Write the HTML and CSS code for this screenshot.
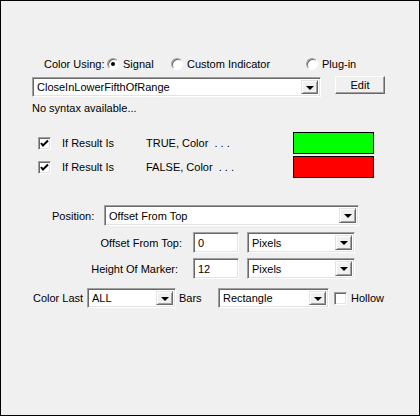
FILE: index.html
```html
<!DOCTYPE html>
<html lang="en">
<head>
    <meta charset="UTF-8">
    <title>Color Marker Settings</title>
    <link rel="stylesheet" href="styles.css">
</head>
<body>

<div class="dialog">

    <!-- Source of the color -->
    <div class="row row-using">
        <span class="using-lbl">Color Using:</span>
        <label class="opt opt-signal"><span class="radio checked"></span>Signal</label>
        <label class="opt opt-custom"><span class="radio"></span>Custom Indicator</label>
        <label class="opt"><span class="radio"></span>Plug-in</label>
    </div>

    <div class="row row-formula">
        <div class="field select formula">
            <span class="value">CloseInLowerFifthOfRange</span>
            <span class="drop"><span class="arrow"></span></span>
        </div>
        <button class="btn">Edit</button>
    </div>

    <div class="row row-syntax">No syntax available...</div>

    <!-- Result colors -->
    <div class="row row-color row-true">
        <span class="check checked"><svg width="9" height="9" viewBox="0 0 9 9"><polyline points="1,4 3,6.5 8,1.5" fill="none" stroke="#000" stroke-width="2"/></svg></span>
        <span class="res-lbl">If Result Is</span>
        <span class="res-val">TRUE, Color &nbsp;. . .</span>
        <span class="swatch green"></span>
    </div>
    <div class="row row-color">
        <span class="check checked"><svg width="9" height="9" viewBox="0 0 9 9"><polyline points="1,4 3,6.5 8,1.5" fill="none" stroke="#000" stroke-width="2"/></svg></span>
        <span class="res-lbl">If Result Is</span>
        <span class="res-val">FALSE, Color &nbsp;. . .</span>
        <span class="swatch red"></span>
    </div>

    <!-- Marker placement -->
    <div class="row row-position">
        <span class="pos-lbl">Position:</span>
        <div class="field select position">
            <span class="value">Offset From Top</span>
            <span class="drop"><span class="arrow"></span></span>
        </div>
    </div>

    <div class="row row-offset">
        <span class="num-lbl">Offset From Top:</span>
        <div class="field num"><span class="value">0</span></div>
        <div class="field select unit">
            <span class="value">Pixels</span>
            <span class="drop"><span class="arrow"></span></span>
        </div>
    </div>

    <div class="row row-height">
        <span class="num-lbl">Height Of Marker:</span>
        <div class="field num"><span class="value">12</span></div>
        <div class="field select unit">
            <span class="value">Pixels</span>
            <span class="drop"><span class="arrow"></span></span>
        </div>
    </div>

    <div class="row row-last">
        <span class="last-lbl">Color Last</span>
        <div class="field select bars">
            <span class="value">ALL</span>
            <span class="drop"><span class="arrow"></span></span>
        </div>
        <span class="bars-lbl">Bars</span>
        <div class="field select shape">
            <span class="value">Rectangle</span>
            <span class="drop"><span class="arrow"></span></span>
        </div>
        <span class="check hollow"></span>
        <span>Hollow</span>
    </div>

</div>

</body>
</html>
```

FILE: styles.css
```css
/* General Styles */
body {
    margin: 0;
    font-family: "Liberation Sans", Arial, sans-serif;
    font-size: 11px;
    color: #000;
}

.dialog {
    width: 420px;
    height: 416px;
    box-sizing: border-box;
    border: 1px solid #000;
    background-color: #f0f0f0;
}

.row {
    display: flex;
    align-items: center;
    white-space: nowrap;
}

/* Color Using */
.row-using {
    margin-top: 56px;
    height: 14px;
    padding-left: 43px;
}

.using-lbl {
    width: 63px;
}

.opt {
    display: flex;
    align-items: center;
}

.opt-signal {
    width: 64px;
}

.opt-custom {
    width: 135px;
}

.radio {
    position: relative;
    width: 12px;
    height: 12px;
    box-sizing: border-box;
    margin-right: 4px;
    border-radius: 50%;
    border: 1px solid;
    border-color: #a0a0a0 #fff #fff #a0a0a0;
    box-shadow: inset 1px 1px 0 #696969;
    background-color: #fff;
}

.radio.checked::after {
    content: "";
    position: absolute;
    left: 3px;
    top: 3px;
    width: 4px;
    height: 4px;
    border-radius: 50%;
    background-color: #000;
}

/* Sunken fields */
.field {
    display: flex;
    align-items: center;
    box-sizing: border-box;
    border: 1px solid;
    border-color: #a0a0a0 #fff #fff #a0a0a0;
    box-shadow: inset 1px 1px 0 #696969, inset -1px -1px 0 #e3e3e3;
    background-color: #fff;
    padding: 2px;
}

.field .value {
    flex: 1;
    padding-left: 2px;
}

.drop {
    display: flex;
    align-items: center;
    justify-content: center;
    width: 17px;
    height: 100%;
    box-sizing: border-box;
    border: 1px solid;
    border-color: #e3e3e3 #696969 #696969 #e3e3e3;
    box-shadow: inset 1px 1px 0 #fff, inset -1px -1px 0 #a0a0a0;
    background-color: #f0f0f0;
}

.arrow {
    width: 0;
    height: 0;
    border-left: 4px solid transparent;
    border-right: 4px solid transparent;
    border-top: 4px solid #000;
    margin-top: 1px;
}

/* Formula row */
.row-formula {
    margin-top: 5px;
    height: 21px;
    padding-left: 31px;
    align-items: flex-start;
}

.formula {
    width: 289px;
    height: 20px;
    margin-top: 1px;
}

.btn {
    width: 50px;
    height: 18px;
    margin-left: 14px;
    padding: 0;
    font-family: inherit;
    font-size: 11px;
    color: #000;
    border: 1px solid;
    border-color: #fff #696969 #696969 #fff;
    box-shadow: inset -1px -1px 0 #a0a0a0;
    background-color: #f0f0f0;
}

.row-syntax {
    margin-top: 4px;
    height: 13px;
    padding-left: 31px;
}

/* Result colors */
.row-color {
    margin-top: 2px;
    height: 22px;
    padding-left: 37px;
}

.row-true {
    margin-top: 18px;
}

.check {
    display: flex;
    align-items: center;
    justify-content: center;
    width: 13px;
    height: 13px;
    box-sizing: border-box;
    border: 1px solid;
    border-color: #a0a0a0 #fff #fff #a0a0a0;
    box-shadow: inset 1px 1px 0 #696969, inset -1px -1px 0 #e3e3e3;
    background-color: #fff;
}

.res-lbl {
    width: 84px;
    margin-left: 11px;
}

.res-val {
    width: 147px;
}

.swatch {
    width: 81px;
    height: 22px;
    box-sizing: border-box;
    border: 1px solid #000;
}

.green {
    background-color: #00ff00;
}

.red {
    background-color: #ff0000;
}

/* Placement */
.row-position {
    margin-top: 27px;
    height: 21px;
    padding-left: 51px;
}

.pos-lbl {
    width: 52px;
}

.position {
    width: 255px;
    height: 21px;
}

.row-offset,
.row-height {
    height: 21px;
}

.row-offset {
    margin-top: 6px;
}

.row-height {
    margin-top: 5px;
}

.num-lbl {
    width: 181px;
    text-align: right;
}

.row-height .num-lbl {
    width: 177px;
    padding-right: 4px;
}

.num {
    width: 46px;
    height: 21px;
    margin-left: 11px;
}

.unit {
    width: 108px;
    height: 21px;
    margin-left: 8px;
}

/* Color last */
.row-last {
    margin-top: 9px;
    height: 20px;
    padding-left: 32px;
}

.last-lbl {
    width: 54px;
}

.bars {
    width: 89px;
    height: 20px;
}

.bars-lbl {
    width: 39px;
    margin-left: 3px;
}

.shape {
    width: 111px;
    height: 20px;
}

.hollow {
    margin-left: 5px;
    margin-right: 4px;
}
```
